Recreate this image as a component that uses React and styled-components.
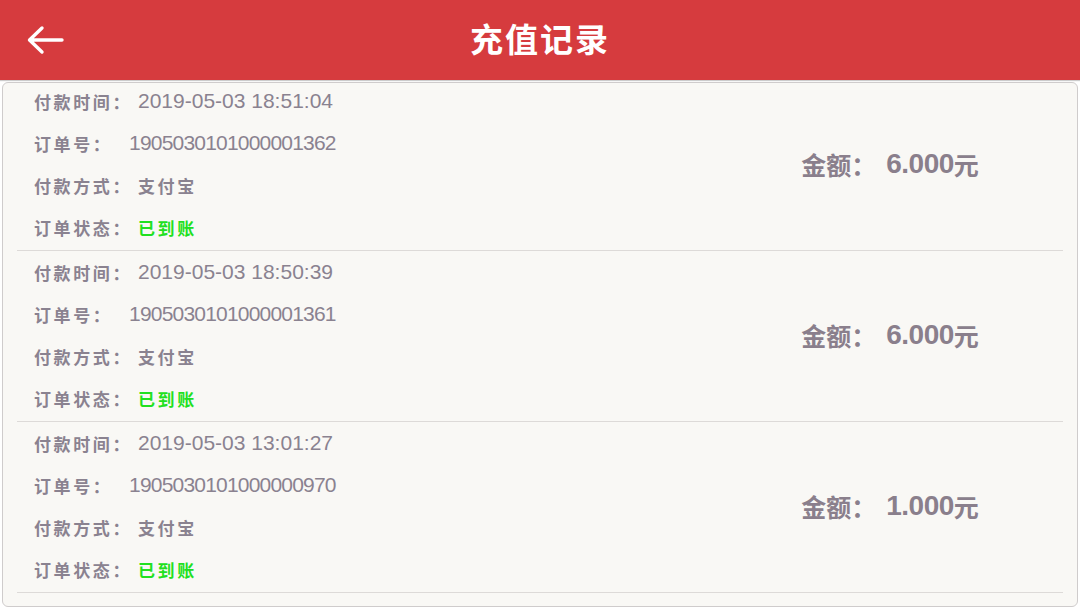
import React from "react";
import styled, { createGlobalStyle } from "styled-components";

const GlobalStyle = createGlobalStyle`
  html, body {
    margin: 0;
    padding: 0;
    height: 100%;
    overflow: hidden;
    background: #ffffff;
    font-family: "Noto Sans CJK SC", "Noto Sans", sans-serif;
  }
`;

const Page = styled.div`
  width: 1080px;
  height: 608px;
  display: flex;
  flex-direction: column;
  overflow: hidden;
`;

const Header = styled.header`
  height: 80px;
  flex-shrink: 0;
  background: #d63b3e;
  display: grid;
  grid-template-columns: 120px 1fr 120px;
  align-items: center;
  box-shadow: 0 1px 1px rgba(0, 0, 0, 0.2);
  position: relative;
  z-index: 1;
`;

const BackButton = styled.button`
  border: none;
  background: none;
  padding: 0 0 0 26px;
  display: flex;
  align-items: center;
  height: 100%;
  cursor: pointer;
`;

const Title = styled.h1`
  margin: 0 0 5px;
  text-align: center;
  color: #ffffff;
  font-size: 33px;
  font-weight: 700;
  letter-spacing: 2px;
`;

const Card = styled.main`
  margin: 2px 2px 1px;
  background: #f9f8f5;
  border: 1px solid #cfcccc;
  border-radius: 6px;
  flex: 1;
  overflow: hidden;
`;

const List = styled.div`
  margin-top: -3px;
`;

const Record = styled.section`
  margin: 0 14px;
  display: grid;
  grid-template-columns: 1fr 346px;
  border-bottom: 1px solid #dddad8;
`;

const Details = styled.div`
  padding: 0 0 2px 17px;
  display: flex;
  flex-direction: column;
`;

const Line = styled.div`
  height: 42px;
  display: flex;
  align-items: center;
  color: #8a8290;
  font-size: 17px;
  font-weight: 700;
`;

const Label = styled.span`
  letter-spacing: 2.6px;
  width: ${(p) => p.$width}px;
  flex-shrink: 0;
`;

const Value = styled.span`
  font-family: "Liberation Sans", "Noto Sans CJK SC", sans-serif;
  font-weight: 400;
  font-size: 21px;
  color: #8a8290;
  letter-spacing: ${(p) => (p.$tight ? "-0.8px" : "0")};
`;

const CnValue = styled.span`
  letter-spacing: 2.6px;
  color: ${(p) => (p.$ok ? "#21e020" : "#8a8290")};
`;

const Amount = styled.div`
  display: flex;
  align-items: center;
  justify-content: center;
  color: #8a7f8c;
  font-size: 25px;
  font-weight: 700;
  padding-bottom: 2px;
`;

const AmountNum = styled.span`
  font-family: "Liberation Sans", sans-serif;
  font-size: 28px;
  font-weight: 700;
  letter-spacing: -0.5px;
  margin-left: 10px;
`;

const records = [
  { time: "2019-05-03 18:51:04", no: "1905030101000001362", amount: "6.000" },
  { time: "2019-05-03 18:50:39", no: "1905030101000001361", amount: "6.000" },
  { time: "2019-05-03 13:01:27", no: "1905030101000000970", amount: "1.000" },
  { time: "2019-05-03 01:50:56", no: "1905030101000000712", amount: "6.000" },
];

const ArrowLeft = () => (
  <svg width="38" height="30" viewBox="0 0 38 30" fill="none">
    <path
      d="M36 15H4M16 3L3.5 15L16 27"
      stroke="#ffffff"
      strokeWidth="3.4"
      strokeLinecap="round"
      strokeLinejoin="round"
    />
  </svg>
);

export default function App() {
  return (
    <>
      <GlobalStyle />
      <Page>
        <Header>
          <BackButton aria-label="返回">
            <ArrowLeft />
          </BackButton>
          <Title>充值记录</Title>
          <div />
        </Header>
        <Card>
          <List>
            {records.map((r) => (
              <Record key={r.no}>
                <Details>
                  <Line>
                    <Label $width={104}>付款时间：</Label>
                    <Value>{r.time}</Value>
                  </Line>
                  <Line>
                    <Label $width={95}>订单号：</Label>
                    <Value $tight>{r.no}</Value>
                  </Line>
                  <Line>
                    <Label $width={104}>付款方式：</Label>
                    <CnValue>支付宝</CnValue>
                  </Line>
                  <Line>
                    <Label $width={104}>订单状态：</Label>
                    <CnValue $ok>已到账</CnValue>
                  </Line>
                </Details>
                <Amount>
                  金额：<AmountNum>{r.amount}</AmountNum>元
                </Amount>
              </Record>
            ))}
          </List>
        </Card>
      </Page>
    </>
  );
}
